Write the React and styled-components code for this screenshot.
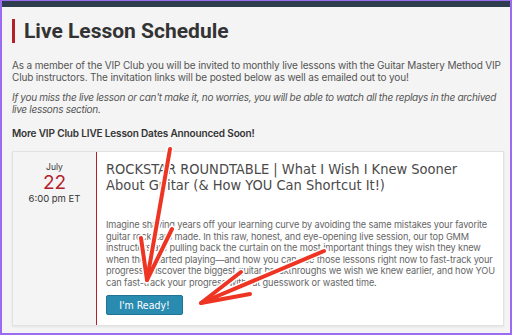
import React from 'react';
import styled, { createGlobalStyle } from 'styled-components';

const GlobalStyle = createGlobalStyle`
  html, body {
    margin: 0;
    padding: 0;
    background: #f4f4f4;
  }
  * { box-sizing: border-box; }
`;

const Frame = styled.div`
  position: relative;
  width: 512px;
  height: 335px;
  overflow: hidden;
  background: #f4f4f4;
  border: 2px solid #9b6cf2;
  border-top-width: 1px;
  font-family: Inter, "Noto Sans", sans-serif;
`;

const TopBar = styled.div`
  height: 6px;
  background: #2f3e4e;
`;

const Content = styled.div`
  padding: 12px 4px 0 10px;
`;

const Heading = styled.h1`
  margin: 0 0 16px 0;
  padding-left: 9px;
  border-left: 3px solid #b3202a;
  font-family: Roboto, sans-serif;
  font-weight: 700;
  font-size: 21px;
  line-height: 24px;
  color: #333;
`;

const Para = styled.p`
  margin: 0 0 ${p => (p.$gap || 8)}px 0;
  font-size: 10px;
  line-height: 12px;
  letter-spacing: ${p => (p.$italic ? '-0.3px' : '-0.15px')};
  font-style: ${p => (p.$italic ? 'italic' : 'normal')};
  font-weight: ${p => (p.$bold ? 600 : 400)};
  color: ${p => (p.$bold ? '#333' : '#555')};
`;

const Card = styled.div`
  display: flex;
  margin-top: 12px;
  margin-right: 2px;
  height: 175px;
  background: #fff;
  border: 1px solid #e2e2e2;
  box-shadow: 0 1px 2px rgba(0, 0, 0, 0.08);
`;

const DateCol = styled.div`
  width: 84px;
  flex-shrink: 0;
  background: #f4f4f4;
  border-right: 1.5px solid #b3202a;
  display: flex;
  flex-direction: column;
  align-items: center;
  padding-top: 10px;
  color: #333;
`;

const Month = styled.div`
  font-size: 8.5px;
  line-height: 11px;
`;

const Day = styled.div`
  font-size: 19px;
  line-height: 20px;
  color: #b3202a;
`;

const Time = styled.div`
  font-size: 9.5px;
  line-height: 12px;
`;

const Body = styled.div`
  flex: 1;
  padding: 9px 6px 0 9px;
`;

const EventTitle = styled.h2`
  margin: 0 24px 26px 0;
  font-family: "DejaVu Sans Condensed", "Liberation Sans Narrow", Roboto, sans-serif;
  font-weight: 400;
  font-size: 14.5px;
  line-height: 16px;
  color: #4a4a4a;
`;

const Desc = styled.p`
  margin: 0 0 5px 0;
  font-size: 9.2px;
  line-height: 11.5px;
  letter-spacing: -0.12px;
  color: #666;
`;

const Button = styled.button`
  font-family: "DejaVu Sans Condensed", "Liberation Sans Narrow", sans-serif;
  font-size: 10.5px;
  color: #fff;
  background: #2a8bb0;
  border: 1px solid #227496;
  border-radius: 2px;
  width: 77px;
  height: 20px;
  padding: 0;
`;

const Arrows = styled.svg`
  position: absolute;
  left: 0;
  top: 0;
  pointer-events: none;
`;

const arrowPaths = [
  'M168 148 L145 279',
  'M139 237 L145 279 L170 228',
  'M322 250 L199 302',
  'M239 271 L199 302 L248 293',
];

export default function App() {
  return (
    <>
      <GlobalStyle />
      <Frame>
        <TopBar />
        <Content>
          <Heading>Live Lesson Schedule</Heading>
          <Para>
            As a member of the VIP Club you will be invited to monthly live lessons with the Guitar Mastery Method VIP
            Club instructors. The invitation links will be posted below as well as emailed out to you!
          </Para>
          <Para $italic $gap={12}>
            If you miss the live lesson or can't make it, no worries, you will be able to watch all the replays in the archived
            live lessons section.
          </Para>
          <Para $bold>More VIP Club LIVE Lesson Dates Announced Soon!</Para>
          <Card>
            <DateCol>
              <Month>July</Month>
              <Day>22</Day>
              <Time>6:00 pm ET</Time>
            </DateCol>
            <Body>
              <EventTitle>
                ROCKSTAR ROUNDTABLE | What I Wish I Knew Sooner About Guitar (&amp; How YOU Can Shortcut It!)
              </EventTitle>
              <Desc>
                Imagine shaving years off your learning curve by avoiding the same mistakes your favorite
                guitar rockstars made. In this raw, honest, and eye-opening live session, our top GMM
                instructors are pulling back the curtain on the most important things they wish they knew
                when they started playing—and how you can use those lessons right now to fast-track your
                progress. Discover the biggest guitar breakthroughs we wish we knew earlier, and how YOU
                can fast-track your progress without guesswork or wasted time.
              </Desc>
              <Button>I'm Ready!</Button>
            </Body>
          </Card>
        </Content>
        <Arrows width="512" height="335" viewBox="0 0 512 335">
          {arrowPaths.map(d => (
            <path key={d + 'w'} d={d} stroke="#fff" strokeWidth="7" fill="none" strokeLinecap="round" strokeLinejoin="round" />
          ))}
          {arrowPaths.map(d => (
            <path key={d} d={d} stroke="#ee3524" strokeWidth="4" fill="none" strokeLinecap="round" strokeLinejoin="round" />
          ))}
        </Arrows>
      </Frame>
    </>
  );
}
